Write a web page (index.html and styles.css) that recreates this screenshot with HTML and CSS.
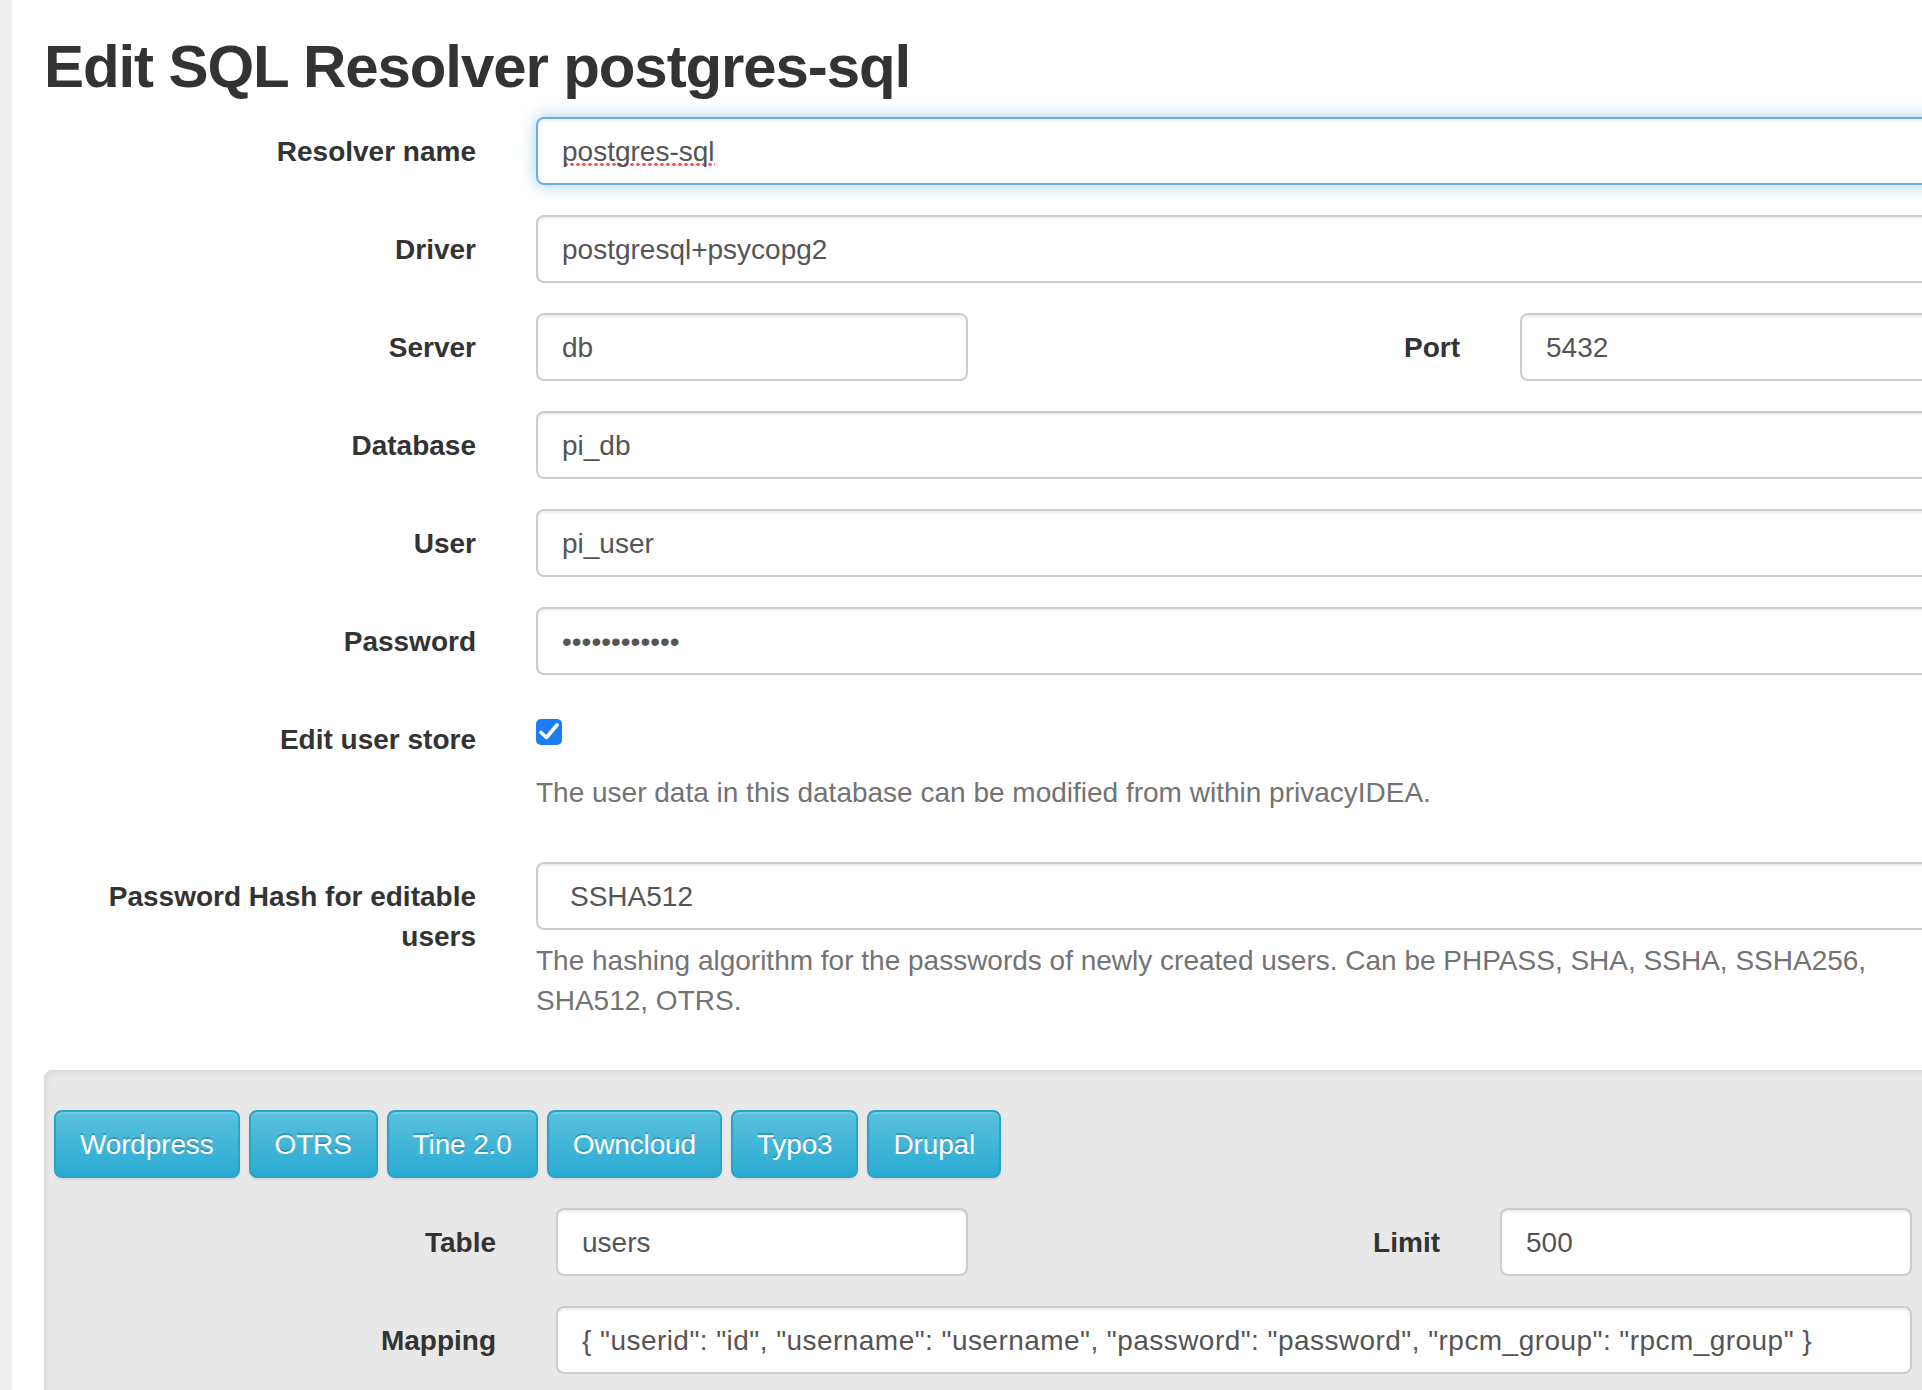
FILE: index.html
```html
<!DOCTYPE html>
<html lang="en">
<head>
<meta charset="utf-8">
<title>Edit SQL Resolver postgres-sql</title>
<link rel="stylesheet" href="styles.css">
</head>
<body>
<div class="page">
  <aside class="edge"></aside>
  <main class="content">
    <h2 class="title">Edit SQL Resolver postgres-sql</h2>
    <form class="form">
      <div class="group">
        <label class="lbl">Resolver name</label>
        <div class="ctl is-focus"><span class="misspelled">postgres-sql</span></div>
      </div>
      <div class="group">
        <label class="lbl">Driver</label>
        <input class="ctl" type="text" value="postgresql+psycopg2">
      </div>
      <div class="group quad">
        <label class="lbl">Server</label>
        <input class="ctl" type="text" value="db">
        <label class="lbl">Port</label>
        <input class="ctl" type="text" value="5432">
      </div>
      <div class="group">
        <label class="lbl">Database</label>
        <input class="ctl" type="text" value="pi_db">
      </div>
      <div class="group">
        <label class="lbl">User</label>
        <input class="ctl" type="text" value="pi_user">
      </div>
      <div class="group">
        <label class="lbl">Password</label>
        <input class="ctl" type="text" value="••••••••••••">
      </div>
      <div class="group">
        <label class="lbl">Edit user store</label>
        <div>
          <div class="check-wrap">
            <span class="check" role="checkbox" aria-checked="true">
              <svg width="26" height="26" viewBox="0 0 26 26"><polyline points="5,13.5 10.5,18.5 21,6" fill="none" stroke="#fff" stroke-width="3.6" stroke-linecap="round" stroke-linejoin="round"/></svg>
            </span>
          </div>
          <p class="help help-check">The user data in this database can be modified from within privacyIDEA.</p>
        </div>
      </div>
      <div class="group">
        <label class="lbl">Password Hash for editable users</label>
        <div>
          <div class="ctl select">SSHA512</div>
          <p class="help">The hashing algorithm for the passwords of newly created users. Can be PHPASS, SHA, SSHA, SSHA256, SHA512, OTRS.</p>
        </div>
      </div>
      <div class="well">
        <div class="btn-row">
          <button type="button" class="btn">Wordpress</button>
          <button type="button" class="btn">OTRS</button>
          <button type="button" class="btn">Tine 2.0</button>
          <button type="button" class="btn">Owncloud</button>
          <button type="button" class="btn">Typo3</button>
          <button type="button" class="btn">Drupal</button>
        </div>
        <div class="group quad">
          <label class="lbl">Table</label>
          <input class="ctl" type="text" value="users">
          <label class="lbl">Limit</label>
          <input class="ctl" type="text" value="500">
        </div>
        <div class="group">
          <label class="lbl">Mapping</label>
          <input class="ctl mapping" type="text" value='{ "userid": "id", "username": "username", "password": "password", "rpcm_group": "rpcm_group" }'>
        </div>
      </div>
    </form>
  </main>
</div>
</body>
</html>
```
FILE: styles.css
```css
html, body {
  margin: 0;
  padding: 0;
  overflow: hidden;
  background: #fff;
}
body {
  font-family: "Liberation Sans", Arial, Helvetica, sans-serif;
  font-size: 28px;
  line-height: 40px;
  color: #333;
}
.page {
  display: flex;
  min-height: 1390px;
}
.edge {
  flex: none;
  width: 12px;
  background: #efefef;
}
.content {
  flex: none;
  width: 1908px;
  padding-left: 32px;
}
.title {
  margin: 34px 0 17px;
  font-size: 60px;
  line-height: 66px;
  font-weight: 700;
  letter-spacing: -1.1px;
  color: #333;
}
.form {
  margin: 0;
}
.group {
  display: grid;
  grid-template-columns: 432px 1416px;
  column-gap: 60px;
  margin-bottom: 30px;
}
.group.quad {
  grid-template-columns: repeat(4, 432px);
}
.lbl {
  display: block;
  padding-top: 15px;
  text-align: right;
  font-weight: 700;
  color: #333;
}
.ctl {
  display: block;
  box-sizing: border-box;
  width: 100%;
  height: 68px;
  margin: 0;
  padding: 13px 24px 11px;
  border: 2px solid #ccc;
  border-radius: 8px;
  background: #fff;
  box-shadow: inset 0 2px 2px rgba(0, 0, 0, 0.075);
  font-family: inherit;
  font-size: 28px;
  line-height: 40px;
  color: #555;
  outline: none;
  white-space: nowrap;
  overflow: hidden;
}
.ctl.is-focus {
  border-color: #66afe9;
  box-shadow: inset 0 2px 2px rgba(0, 0, 0, 0.075), 0 0 16px rgba(102, 175, 233, 0.6);
}
.ctl.mapping {
  letter-spacing: 0.45px;
}
.misspelled {
  background-image: radial-gradient(circle, #ef5b5b 1.5px, transparent 2px);
  background-size: 6px 5px;
  background-repeat: repeat-x;
  background-position: 1px 100%;
}
.ctl.select {
  padding-left: 32px;
}
.check-wrap {
  padding-top: 14px;
  height: 40px;
}
.check {
  display: block;
  width: 26px;
  height: 26px;
  border-radius: 5px;
  background: #1a7df5;
}
.check svg {
  display: block;
}
.help {
  margin: 11px 0 19px;
  color: #737373;
}
.help-check {
  margin-top: 14px;
}
.well {
  box-sizing: border-box;
  width: 1908px;
  padding: 38px 38px 260px;
  border: 2px solid #dcdcdc;
  border-radius: 8px;
  background: #e8e8e8;
  box-shadow: inset 0 2px 6px rgba(0, 0, 0, 0.05);
}
.well .group {
  grid-template-columns: 412px 1356px;
}
.well .group.quad {
  grid-template-columns: repeat(4, 412px);
}
.btn-row {
  display: flex;
  gap: 9px;
  margin: 0 -30px 30px;
}
.btn {
  box-sizing: border-box;
  height: 68px;
  margin: 0;
  padding: 13px 24px 11px;
  border: 2px solid #28a4c9;
  border-radius: 8px;
  background: linear-gradient(to bottom, #5bc0de 0%, #2aabd2 100%);
  box-shadow: inset 0 2px 0 rgba(255, 255, 255, 0.15), 0 2px 2px rgba(0, 0, 0, 0.075);
  color: #fff;
  text-shadow: 0 -2px 0 rgba(0, 0, 0, 0.2);
  font-family: inherit;
  font-size: 28px;
  line-height: 40px;
  letter-spacing: -0.15px;
  cursor: pointer;
}
```
